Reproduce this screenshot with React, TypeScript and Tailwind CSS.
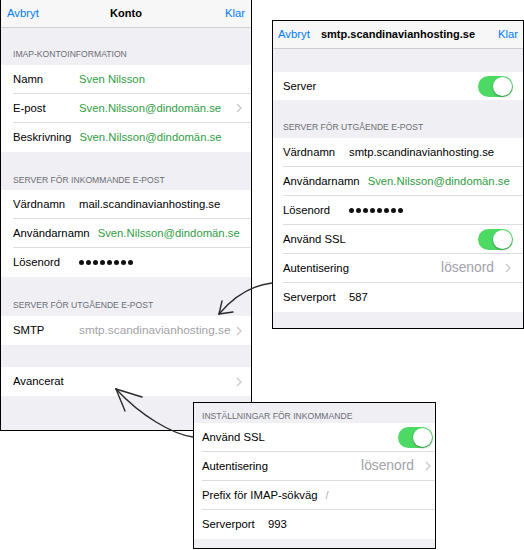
import React from 'react';

function Chevron() {
  return (
    <svg width="6" height="10" viewBox="0 0 6 10" className="shrink-0">
      <path d="M1 1l4 4-4 4" fill="none" stroke="#c7c7cc" strokeWidth="1.3" />
    </svg>
  );
}

function Toggle() {
  return (
    <div className="relative h-[21px] w-[35px] shrink-0 rounded-full bg-[#4cd964]">
      <div className="absolute right-[1px] top-[1px] h-[19px] w-[19px] rounded-full bg-white shadow-[0_1px_2px_rgba(0,0,0,0.35)]" />
    </div>
  );
}

function Dots() {
  return (
    <div className="flex gap-[2px]">
      {[0, 1, 2, 3, 4, 5, 6, 7].map((i) => (
        <span key={i} className="h-[5px] w-[5px] rounded-full bg-[#111]" />
      ))}
    </div>
  );
}

function NavBar({ title, pad }: { title: string; pad: string }) {
  return (
    <div className={`relative flex h-[28px] shrink-0 items-center justify-between border-b border-[#cfcfd3] bg-[#f7f7f8] text-[11.3px] ${pad}`}>
      <span className="text-[#007aff]">Avbryt</span>
      <span className="absolute left-0 right-0 text-center text-[11px] font-bold text-black">{title}</span>
      <span className="text-[#007aff]">Klar</span>
    </div>
  );
}

function Header({ text, cls }: { text: string; cls: string }) {
  return (
    <div className={`flex shrink-0 items-end text-[8.6px] uppercase text-[#6d6d72] ${cls}`}>
      {text}
    </div>
  );
}

interface RowProps {
  label: string;
  children?: React.ReactNode;
  trailing?: React.ReactNode;
  last?: boolean;
  pl: string;
  pr: string;
  h?: string;
}

function Row({ label, children, trailing, last, pl, pr, h = 'h-[29px]' }: RowProps) {
  return (
    <div className={`bg-white ${pl}`}>
      <div className={`flex items-center gap-2 ${h} ${pr} ${last ? '' : 'border-b border-[#dcdce0]'}`}>
        <span className="min-w-[58px] shrink-0 whitespace-nowrap text-[11.3px] text-black">{label}</span>
        <div className="flex min-w-0 flex-1 items-center whitespace-nowrap text-[11.3px]">{children}</div>
        {trailing}
      </div>
    </div>
  );
}

const green = 'text-[#2f9e3f]';

function LeftPanel() {
  const pl = 'pl-[12px]';
  const pr = 'pr-[9px]';
  return (
    <div className="absolute left-0 top-0 flex h-[431px] w-[252px] flex-col overflow-hidden border-x border-b border-black bg-[#efeff4]">
      <NavBar title="Konto" pad="px-[6px]" />
      <Header text="IMAP-kontoinformation" cls="h-[37px] pb-[4px] pl-[12px]" />
      <Row label="Namn" pl={pl} pr={pr}>
        <span className={green}>Sven Nilsson</span>
      </Row>
      <Row label="E-post" pl={pl} pr={pr} trailing={<Chevron />}>
        <span className={green}>Sven.Nilsson@dindomän.se</span>
      </Row>
      <Row label="Beskrivning" pl={pl} pr={pr} last>
        <span className={green}>Sven.Nilsson@dindomän.se</span>
      </Row>
      <Header text="Server för inkommande e-post" cls="h-[38px] pb-[3px] pl-[12px]" />
      <Row label="Värdnamn" pl={pl} pr={pr}>
        <span className="text-black">mail.scandinavianhosting.se</span>
      </Row>
      <Row label="Användarnamn" pl={pl} pr={pr}>
        <span className={green}>Sven.Nilsson@dindomän.se</span>
      </Row>
      <Row label="Lösenord" pl={pl} pr={pr} last>
        <Dots />
      </Row>
      <Header text="Server för utgående e-post" cls="h-[39px] pb-[4px] pl-[12px]" />
      <Row label="SMTP" pl={pl} pr={pr} last trailing={<Chevron />}>
        <span className="ml-auto mr-[2px] text-[11.8px] text-[#a2a2a7]">smtp.scandinavianhosting.se</span>
      </Row>
      <div className="h-[22px] shrink-0" />
      <Row label="Avancerat" pl={pl} pr={pr} last trailing={<Chevron />} />
      <div className="flex-1" />
    </div>
  );
}

function RightPanel() {
  const pl = 'pl-[10px]';
  const pr = 'pr-[10px]';
  return (
    <div className="absolute left-[272px] top-[20px] flex h-[309px] w-[252px] flex-col overflow-hidden border border-black bg-[#efeff4]">
      <NavBar title="smtp.scandinavianhosting.se" pad="px-[5px]" />
      <div className="h-[23px] shrink-0" />
      <Row label="Server" pl={pl} pr={pr} last h="h-[28px]" trailing={<Toggle />} />
      <Header text="Server för utgående e-post" cls="h-[38px] pb-[4px] pl-[10px]" />
      <Row label="Värdnamn" pl={pl} pr={pr}>
        <span className="text-black">smtp.scandinavianhosting.se</span>
      </Row>
      <Row label="Användarnamn" pl={pl} pr={pr}>
        <span className={green}>Sven.Nilsson@dindomän.se</span>
      </Row>
      <Row label="Lösenord" pl={pl} pr={pr}>
        <Dots />
      </Row>
      <Row label="Använd SSL" pl={pl} pr={pr} trailing={<Toggle />} />
      <Row label="Autentisering" pl={pl} pr="pr-[12px]" trailing={<Chevron />}>
        <span className="ml-auto mr-[3px] text-[13.8px] text-[#a2a2a7]">lösenord</span>
      </Row>
      <Row label="Serverport" pl={pl} pr={pr} last>
        <span className="text-black">587</span>
      </Row>
      <div className="flex-1" />
    </div>
  );
}

function BottomPanel() {
  const pl = 'pl-[8px]';
  return (
    <div className="absolute left-[193px] top-[402px] flex h-[147px] w-[243px] flex-col overflow-hidden border border-black bg-[#efeff4]">
      <Header text="Inställningar för inkommande" cls="h-[20px] items-center pl-[8px]" />
      <Row label="Använd SSL" pl={pl} pr="pr-[2px]" trailing={<Toggle />} />
      <Row label="Autentisering" pl={pl} pr="pr-[4px]" trailing={<Chevron />}>
        <span className="ml-auto mr-[3px] text-[13.8px] text-[#a2a2a7]">lösenord</span>
      </Row>
      <Row label="Prefix för IMAP-sökväg" pl={pl} pr="pr-[4px]">
        <span className="text-[#b0b0b5]">/</span>
      </Row>
      <Row label="Serverport" pl={pl} pr="pr-[4px]" last>
        <span className="text-black">993</span>
      </Row>
      <div className="flex-1" />
    </div>
  );
}

function Arrows() {
  return (
    <svg className="pointer-events-none absolute left-0 top-0" width="524" height="550" viewBox="0 0 524 550">
      <g fill="none" stroke="#2b2b2b" strokeWidth="1.4" strokeLinecap="round" strokeLinejoin="round">
        <path d="M272 283 C 255 285, 236 294, 219 314" />
        <path d="M219 314 L 222 301" />
        <path d="M219 314 L 233 312" />
        <path d="M193 437 C 172 434, 141 416, 116 389" />
        <path d="M116 389 L 142 397" />
        <path d="M116 389 L 125 411" />
      </g>
    </svg>
  );
}

export default function App() {
  return (
    <div className="relative h-[550px] w-[524px] overflow-hidden bg-white font-['Liberation_Sans',Arial,sans-serif]">
      <LeftPanel />
      <RightPanel />
      <BottomPanel />
      <Arrows />
    </div>
  );
}
